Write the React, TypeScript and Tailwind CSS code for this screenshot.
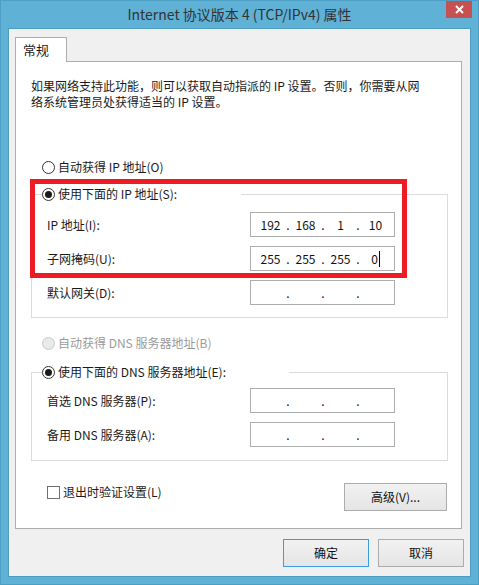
import React from "react";

const font = "font-['Noto_Sans_CJK_SC',sans-serif]";

const Radio = ({ checked, disabled }: { checked?: boolean; disabled?: boolean }) => (
  <span
    className={`flex h-[13px] w-[13px] shrink-0 items-center justify-center rounded-full border ${
      disabled ? "border-[#c8c8c8] bg-[#e9e9e9]" : "border-[#333] bg-white"
    }`}
  >
    {checked && <span className="h-[7px] w-[7px] rounded-full bg-[#1a1a1a]" />}
  </span>
);

const IpBox = ({ parts, caret }: { parts: string[]; caret?: boolean }) => (
  <div className="flex h-[25px] w-[145px] items-center border border-[#adadad] bg-white pl-[4px] text-[12px] leading-[16px] text-[#111]">
    {parts.map((p, i) => (
      <React.Fragment key={i}>
        <span className="flex w-[31px] items-center justify-center">
          {p}
          {caret && i === 3 && <span className="ml-px inline-block h-[16px] w-px bg-black" />}
        </span>
        {i < 3 && <span className="w-[4px] text-center">.</span>}
      </React.Fragment>
    ))}
  </div>
);

const Row = ({ label, parts, caret }: { label: string; parts: string[]; caret?: boolean }) => (
  <div className="flex h-[25px] items-center pl-[15px] pr-[52px]">
    <span className="flex-1 whitespace-nowrap">{label}</span>
    <IpBox parts={parts} caret={caret} />
  </div>
);

const Btn = ({ children, primary, className = "" }: { children: React.ReactNode; primary?: boolean; className?: string }) => (
  <button
    type="button"
    className={`flex h-[28px] items-center justify-center border bg-gradient-to-b from-[#f2f2f2] to-[#e5e5e5] text-[12px] text-[#111] ${
      primary ? "border-[#3c9be4]" : "border-[#acacac]"
    } ${className}`}
  >
    {children}
  </button>
);

const empty = ["", "", "", ""];

export default function App() {
  return (
    <div className={`relative flex h-[585px] w-[479px] flex-col border border-[#4e9fc6] bg-[#5fb1d6] ${font} text-[12px] text-[#1a1a1a]`}>
      {/* title bar */}
      <div className="relative flex h-[27px] shrink-0 items-center justify-center text-[14px] text-[#333]">
        Internet 协议版本 4 (TCP/IPv4) 属性
        <div className="absolute right-[6px] top-0 flex h-[17px] w-[26px] items-center justify-center bg-[#c75050] text-white">
          <svg width="9" height="9" viewBox="0 0 9 9">
            <path d="M1 1L8 8M8 1L1 8" stroke="white" strokeWidth="2" />
          </svg>
        </div>
      </div>

      {/* client area */}
      <div className="mx-[7px] mb-[7px] flex flex-1 flex-col border border-[#4e9cc2] bg-[#f0f0f0] pl-[6px]">
        {/* tab header */}
        <div className="mt-[8px] flex">
          <div className="relative z-10 -mb-px flex h-[25px] w-[52px] items-center border border-b-0 border-[#adadad] bg-white pl-[7px] text-[13px]">
            常规
          </div>
        </div>

        {/* tab panel */}
        <div className="flex h-[468px] w-[447px] flex-col border border-[#adadad] bg-white">
          <p className="ml-[15px] mt-[16px] whitespace-nowrap leading-[16px]">
            如果网络支持此功能，则可以获取自动指派的 IP 设置。否则，你需要从网
            <br />
            络系统管理员处获得适当的 IP 设置。
          </p>

          <div className="ml-[26px] mt-[47px] flex h-[20px] items-center gap-[3px]">
            <Radio />
            <span>自动获得 IP 地址(O)</span>
          </div>

          <fieldset className="ml-[15px] mr-[13px] mt-[7px] border border-[#dcdcdc] pb-[12px]">
            <legend className="ml-[10px] flex h-[20px] w-[199px] items-center gap-[3px]">
              <Radio checked />
              <span>使用下面的 IP 地址(S):</span>
            </legend>
            <div className="mt-[8px] flex flex-col gap-[9px]">
              <Row label="IP 地址(I):" parts={["192", "168", "1", "10"]} />
              <Row label="子网掩码(U):" parts={["255", "255", "255", "0"]} caret />
              <Row label="默认网关(D):" parts={empty} />
            </div>
          </fieldset>

          <div className="ml-[26px] mt-[15px] flex h-[20px] items-center gap-[3px] text-[#9a9a9a]">
            <Radio disabled />
            <span>自动获得 DNS 服务器地址(B)</span>
          </div>

          <fieldset className="ml-[15px] mr-[13px] mt-[9px] border border-[#dcdcdc] pb-[13px]">
            <legend className="ml-[10px] flex h-[20px] w-[247px] items-center gap-[3px]">
              <Radio checked />
              <span>使用下面的 DNS 服务器地址(E):</span>
            </legend>
            <div className="mt-[6px] flex flex-col gap-[9px]">
              <Row label="首选 DNS 服务器(P):" parts={empty} />
              <Row label="备用 DNS 服务器(A):" parts={empty} />
            </div>
          </fieldset>

          <div className="ml-[31px] mr-[14px] mt-[22px] flex items-start justify-between">
            <div className="flex h-[18px] items-center gap-[3px]">
              <span className="h-[13px] w-[13px] border border-[#707070] bg-white" />
              <span>退出时验证设置(L)</span>
            </div>
            <Btn className="w-[103px]">高级(V)...</Btn>
          </div>
        </div>

        {/* dialog buttons */}
        <div className="mr-[6px] mt-[10px] flex justify-end gap-[9px]">
          <Btn primary className="w-[86px]">
            确定
          </Btn>
          <Btn className="w-[86px]">取消</Btn>
        </div>
      </div>

      {/* red annotation box */}
      <div className="absolute left-[29px] top-[178px] h-[99px] w-[377px] border-[5px] border-[#ed1c24]" />
    </div>
  );
}
